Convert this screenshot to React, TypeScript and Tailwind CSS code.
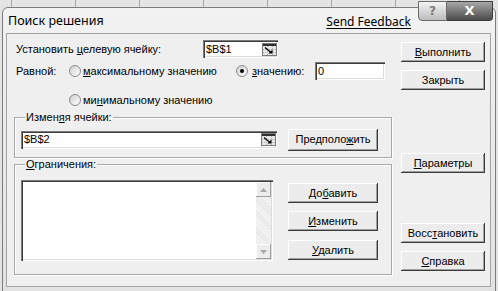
import React from "react";

/* Solver dialog (Поиск решения), grayscale classic theme. */

function U({ children }: { children: React.ReactNode }) {
  return <span className="underline underline-offset-[1px]">{children}</span>;
}

function Btn({ children, className = "" }: { children: React.ReactNode; className?: string }) {
  return (
    <div
      className={
        "flex h-[20px] items-center justify-center bg-[#ececec] text-[11px] text-black shadow-[inset_-1px_-1px_0_#3c3c3c,inset_1px_1px_0_#ffffff,inset_-2px_-2px_0_#a0a0a0] " +
        className
      }
    >
      {children}
    </div>
  );
}

function Radio({ checked = false }: { checked?: boolean }) {
  return (
    <span className="relative flex h-[12px] w-[12px] shrink-0 items-center justify-center rounded-full border border-[#8a8a8a] bg-gradient-to-br from-[#d0d0d0] to-[#ffffff]">
      {checked && <span className="h-[4px] w-[4px] rounded-full bg-black" />}
    </span>
  );
}

function RefIcon() {
  return (
    <svg width="15" height="13" viewBox="0 0 15 13" className="shrink-0">
      <rect x="0.5" y="0.5" width="14" height="12" fill="#e8e8e8" stroke="#7a7a7a" />
      <rect x="1" y="1" width="13" height="2" fill="#303030" />
      <path d="M1 6.5h13M1 9.5h13M5.5 3v9M10.5 3v9" stroke="#b0b0b0" strokeDasharray="1 1" />
      <path d="M3 4.5l6 5" stroke="#000" strokeWidth="1.3" />
      <path d="M6.5 10.5h4v-4z" fill="#000" />
    </svg>
  );
}

function Input({ value, width, picker = false }: { value: string; width: string; picker?: boolean }) {
  return (
    <div
      className={
        "flex h-[18px] items-center bg-white pl-[3px] pr-[1px] shadow-[inset_1px_1px_0_#7a7a7a,inset_2px_2px_0_#3c3c3c,inset_-1px_-1px_0_#ffffff,inset_-2px_-2px_0_#dcdcdc] " +
        width
      }
    >
      <span className="flex-1 text-[11px]">{value}</span>
      {picker && <RefIcon />}
    </div>
  );
}

function ScrollArrow({ up }: { up?: boolean }) {
  return (
    <div className="flex h-[15px] w-[15px] items-center justify-center bg-[#ececec] shadow-[inset_-1px_-1px_0_#a0a0a0,inset_1px_1px_0_#ffffff]">
      <svg width="7" height="4" viewBox="0 0 7 4">
        <path d={up ? "M0 4L3.5 0L7 4z" : "M0 0L3.5 4L7 0z"} fill="#a8a8a8" />
      </svg>
    </div>
  );
}

export default function App() {
  return (
    <div className="relative h-[291px] w-[498px] overflow-hidden bg-[#e4e4e4] bg-[repeating-linear-gradient(90deg,transparent_0,transparent_11px,#a8a8a8_11px,#a8a8a8_12px,transparent_12px,transparent_64px)] font-['Liberation_Sans',Arial,sans-serif] text-[11px] text-black">
      {/* window frame */}
      <div className="relative ml-[2px] mt-[7px] h-[290px] w-[494px] rounded-t-[6px] border border-[#7c7c7c] bg-gradient-to-b from-[#f2f2f2] to-[#e2e2e2]">
        {/* caption */}
        <div className="flex h-[25px] items-center">
          <span className="pl-[5px] pt-[2px] font-['Noto_Sans',sans-serif] text-[12.5px] text-black">Поиск решения</span>
          <span className="ml-auto mr-[84px] pt-[2px] font-['Noto_Sans',sans-serif] text-[12px] text-black underline underline-offset-[2px]">
            Send Feedback
          </span>
        </div>
        <div className="absolute right-[2px] top-[-7px] flex h-[20px]">
          <div className="flex w-[29px] items-center justify-center rounded-bl-[4px] border border-[#6a6a6a] bg-gradient-to-b from-[#f4f4f4] to-[#bcbcbc] font-['DejaVu_Sans',sans-serif] text-[12px] font-bold text-[#7a7a7a]">
            ?
          </div>
          <div className="flex w-[46px] items-center justify-center rounded-br-[4px] border border-l-0 border-[#3c3c3c] bg-gradient-to-b from-[#a8a8a8] to-[#4c4c4c] font-['DejaVu_Sans',sans-serif] text-[13px] font-bold text-white">
            X
          </div>
        </div>

        {/* client area */}
        <div className="ml-[3px] flex h-[254px] w-[485px] border border-[#a4a4a4] bg-[#efefef]">
          {/* left column */}
          <div className="w-[387px] pl-[7px]">
            <div className="mt-[6px] flex h-[18px] items-center pl-[2px]">
              <span className="w-[187px]">
                Установить <U>ц</U>елевую ячейку:
              </span>
              <Input value="$B$1" width="w-[75px]" picker />
            </div>
            <div className="mt-[4px] flex h-[18px] items-center pl-[2px]">
              <span className="w-[53px]">Равной:</span>
              <span className="flex w-[167px] items-center gap-[2px]">
                <Radio />
                <span>
                  <U>м</U>аксимальному значению
                </span>
              </span>
              <span className="flex w-[79px] items-center gap-[4px]">
                <Radio checked />
                <span>
                  <U>з</U>начению:
                </span>
              </span>
              <Input value="0" width="w-[70px]" />
            </div>
            <div className="mt-[12px] flex h-[16px] items-center gap-[2px] pl-[55px]">
              <Radio />
              <span>
                ми<U>н</U>имальному значению
              </span>
            </div>

            <fieldset className="mt-[3px] w-[378px] border border-[#a8a8a8] pb-[6px] pl-[6px] pt-[4px] shadow-[inset_1px_1px_0_#ffffff,1px_1px_0_#ffffff]">
              <legend className="ml-[4px] px-[1px] leading-[13px]">
                Измен<U>я</U>я ячейки:
              </legend>
              <div className="flex h-[23px] items-center">
                <Input value="$B$2" width="w-[256px]" picker />
                <Btn className="ml-[11px] h-[22px] w-[90px]">
                  <span>
                    Предполо<U>ж</U>ить
                  </span>
                </Btn>
              </div>
            </fieldset>

            <fieldset className="w-[378px] border border-[#a8a8a8] pb-[13px] pl-[6px] pt-[9px] shadow-[inset_1px_1px_0_#ffffff,1px_1px_0_#ffffff]">
              <legend className="ml-[4px] px-[1px] leading-[13px]">
                <U>О</U>граничения:
              </legend>
              <div className="flex">
                <div className="flex h-[81px] w-[252px] bg-white shadow-[inset_1px_1px_0_#7a7a7a,inset_2px_2px_0_#3c3c3c,inset_-1px_-1px_0_#ffffff,inset_-2px_-2px_0_#dcdcdc]">
                  <div className="flex-1" />
                  <div className="my-[2px] mr-[2px] flex w-[15px] flex-col justify-between bg-[repeating-linear-gradient(45deg,#f6f6f6_0,#f6f6f6_1px,#e6e6e6_1px,#e6e6e6_2px)]">
                    <ScrollArrow up />
                    <ScrollArrow />
                  </div>
                </div>
                <div className="ml-[15px] mt-[3px] flex w-[90px] flex-col">
                  <Btn className="h-[19px]">
                    <span>
                      До<U>б</U>авить
                    </span>
                  </Btn>
                  <Btn className="mt-[8px] h-[19px]">
                    <span>
                      <U>И</U>зменить
                    </span>
                  </Btn>
                  <Btn className="mt-[9px] h-[19px]">
                    <span>
                      <U>У</U>далить
                    </span>
                  </Btn>
                </div>
              </div>
            </fieldset>
          </div>

          {/* right column */}
          <div className="ml-[7px] flex w-[84px] flex-col">
            <Btn className="mt-[8px]">
              <span>
                <U>В</U>ыполнить
              </span>
            </Btn>
            <Btn className="mt-[8px]">Закрыть</Btn>
            <Btn className="mt-[63px]">
              <span>
                <U>П</U>араметры
              </span>
            </Btn>
            <Btn className="mt-[50px]">
              <span>
                Восс<U>т</U>ановить
              </span>
            </Btn>
            <Btn className="mt-[8px]">
              <span>
                <U>С</U>правка
              </span>
            </Btn>
          </div>
        </div>
      </div>
    </div>
  );
}
